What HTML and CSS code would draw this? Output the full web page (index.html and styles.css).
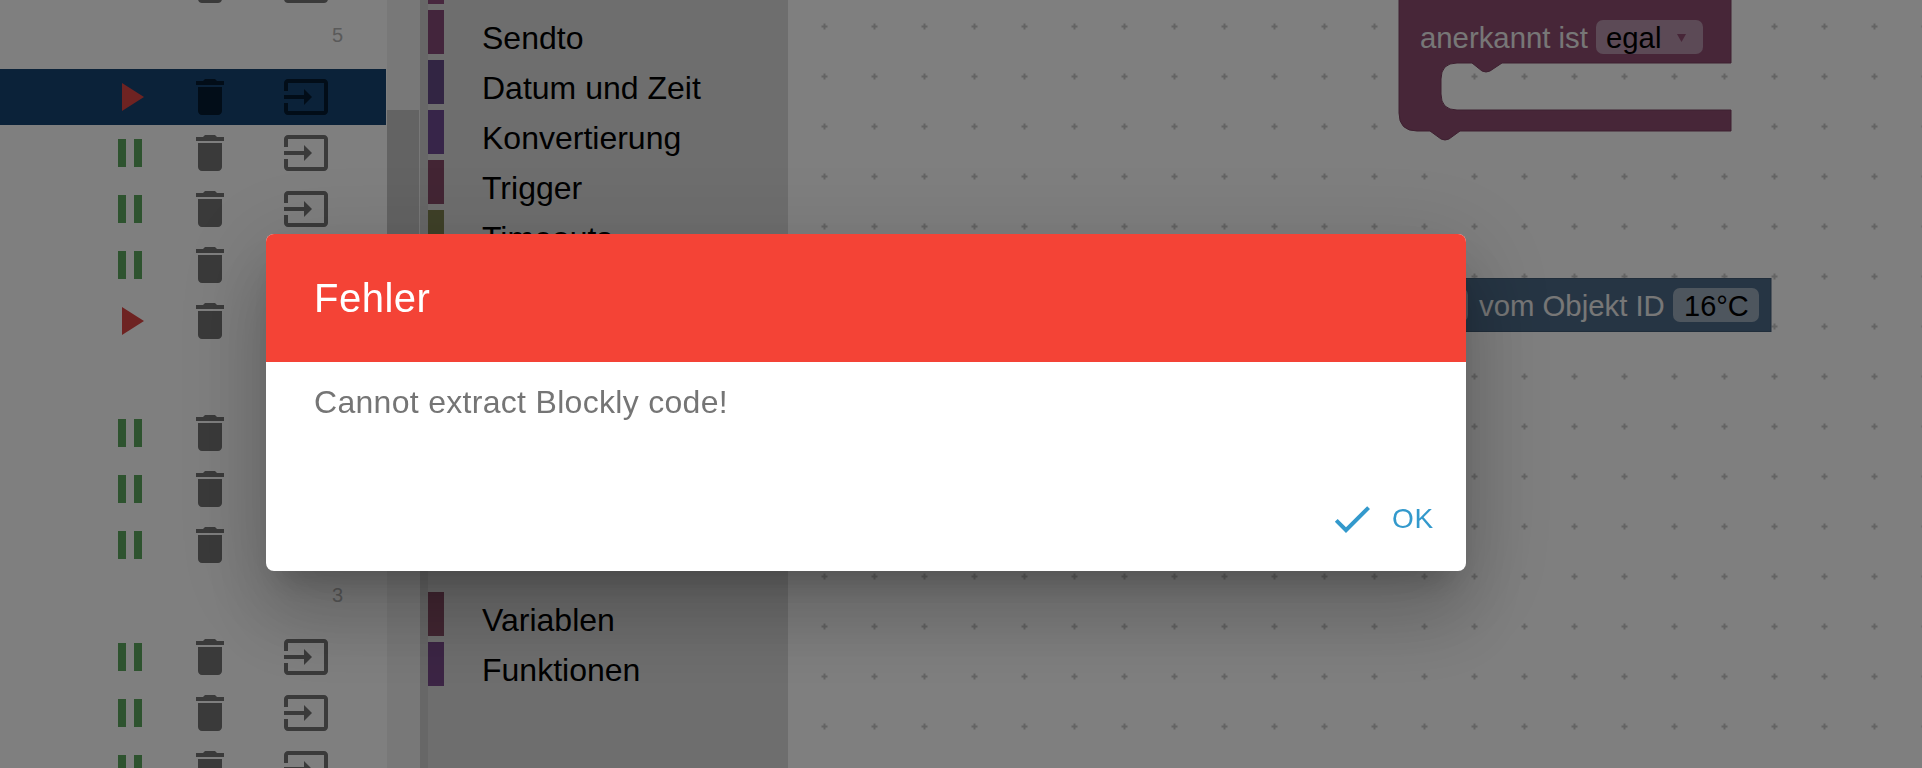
FILE: index.html
```html
<!DOCTYPE html>
<html lang="de">
<head>
<meta charset="utf-8">
<title>Skripte</title>
<link rel="stylesheet" href="styles.css">
</head>
<body>
<svg class="defs" width="0" height="0" aria-hidden="true">
  <symbol id="i-pause" viewBox="0 0 24 24"><path d="M6 19h4V5H6v14zm8-14v14h4V5h-4z"/></symbol>
  <symbol id="i-play" viewBox="0 0 24 24"><path d="M8 5v14l11-7z"/></symbol>
  <symbol id="i-delete" viewBox="0 0 24 24"><path d="M6 19c0 1.1.9 2 2 2h8c1.1 0 2-.9 2-2V7H6v12zM19 4h-3.5l-1-1h-5l-1 1H5v2h14V4z"/></symbol>
  <symbol id="i-input" viewBox="0 0 24 24"><path d="M21 3.01H3c-1.1 0-2 .9-2 2V9h2V4.99h18v14.03H3V15H1v4.01c0 1.1.9 1.98 2 1.98h18c1.1 0 2-.88 2-1.98v-14c0-1.11-.9-2-2-2zM11 16l4-4-4-4v3H1v2h10v3z"/></symbol>
  <symbol id="i-check" viewBox="0 0 24 24"><path d="M9 16.17L4.83 12l-1.42 1.41L9 19 21 7l-1.41-1.41z"/></symbol>
</svg>

<div class="app">
  <section class="scripts">
    <div class="row">
      <svg class="icon pause"><use href="#i-pause"/></svg>
      <svg class="icon action"><use href="#i-delete"/></svg>
      <svg class="icon action"><use href="#i-input"/></svg>
    </div>
    <div class="group">5</div>
    <div class="row selected">
      <svg class="icon play"><use href="#i-play"/></svg>
      <svg class="icon action"><use href="#i-delete"/></svg>
      <svg class="icon action"><use href="#i-input"/></svg>
    </div>
    <div class="row">
      <svg class="icon pause"><use href="#i-pause"/></svg>
      <svg class="icon action"><use href="#i-delete"/></svg>
      <svg class="icon action"><use href="#i-input"/></svg>
    </div>
    <div class="row">
      <svg class="icon pause"><use href="#i-pause"/></svg>
      <svg class="icon action"><use href="#i-delete"/></svg>
      <svg class="icon action"><use href="#i-input"/></svg>
    </div>
    <div class="row">
      <svg class="icon pause"><use href="#i-pause"/></svg>
      <svg class="icon action"><use href="#i-delete"/></svg>
      <svg class="icon action"><use href="#i-input"/></svg>
    </div>
    <div class="row">
      <svg class="icon play"><use href="#i-play"/></svg>
      <svg class="icon action"><use href="#i-delete"/></svg>
      <svg class="icon action"><use href="#i-input"/></svg>
    </div>
    <div class="group"></div>
    <div class="row">
      <svg class="icon pause"><use href="#i-pause"/></svg>
      <svg class="icon action"><use href="#i-delete"/></svg>
      <svg class="icon action"><use href="#i-input"/></svg>
    </div>
    <div class="row">
      <svg class="icon pause"><use href="#i-pause"/></svg>
      <svg class="icon action"><use href="#i-delete"/></svg>
      <svg class="icon action"><use href="#i-input"/></svg>
    </div>
    <div class="row">
      <svg class="icon pause"><use href="#i-pause"/></svg>
      <svg class="icon action"><use href="#i-delete"/></svg>
      <svg class="icon action"><use href="#i-input"/></svg>
    </div>
    <div class="group">3</div>
    <div class="row">
      <svg class="icon pause"><use href="#i-pause"/></svg>
      <svg class="icon action"><use href="#i-delete"/></svg>
      <svg class="icon action"><use href="#i-input"/></svg>
    </div>
    <div class="row">
      <svg class="icon pause"><use href="#i-pause"/></svg>
      <svg class="icon action"><use href="#i-delete"/></svg>
      <svg class="icon action"><use href="#i-input"/></svg>
    </div>
    <div class="row">
      <svg class="icon pause"><use href="#i-pause"/></svg>
      <svg class="icon action"><use href="#i-delete"/></svg>
      <svg class="icon action"><use href="#i-input"/></svg>
    </div>
  </section>

  <div class="scrollbar"><div class="thumb"></div></div>
  <div class="splitter"></div>

  <nav class="toolbox">
    <div class="cat c-system"></div>
    <div class="cat c-sendto">Sendto</div>
    <div class="cat c-date">Datum und Zeit</div>
    <div class="cat c-convert">Konvertierung</div>
    <div class="cat c-trigger">Trigger</div>
    <div class="cat c-timeouts">Timeouts</div>
    <div class="cat c-vars far">Variablen</div>
    <div class="cat c-funcs">Funktionen</div>
  </nav>

  <svg class="workspace" viewBox="788 0 1134 768" preserveAspectRatio="xMinYMin slice">
    <defs>
      <pattern id="grid" x="774.5" y="26.5" width="50" height="50" patternUnits="userSpaceOnUse">
        <path class="grid-mark" d="M0 -3V3M-3 0H3M50 -3V3M47 0H53M0 47V53M-3 50H3M50 47V53M47 50H53"/>
      </pattern>
    </defs>
    <rect class="grid-fill" x="788" y="0" width="1134" height="768"/>
    <path class="block-purple" d="M1399 -10H1731V63H1502L1490 71Q1486 73 1482 71L1472 63H1457Q1441 63 1441 79V94Q1441 110 1457 110H1731V131H1460L1449 139Q1445 141 1441 139L1430 131H1417Q1399 131 1399 113Z"/>
    <text class="block-label" x="1420" y="48">anerkannt ist</text>
    <rect class="field-purple" x="1596" y="20" width="107" height="34" rx="7"/>
    <text class="field-text" x="1606" y="48">egal</text>
    <path class="field-arrow" d="M1677 34H1686L1681.5 42Z"/>
    <rect class="block-blue" x="1440" y="278.5" width="331" height="53"/>
    <rect class="field-blue" x="1440" y="288" width="28" height="34" rx="7"/>
    <text class="block-label" x="1479" y="316">vom Objekt ID</text>
    <rect class="field-blue" x="1673" y="288" width="86" height="34" rx="7"/>
    <text class="field-text narrow" x="1684" y="316">16°C</text>
  </svg>
</div>

<div class="backdrop"></div>

<div class="dialog" role="dialog">
  <h2 class="dialog-title">Fehler</h2>
  <p class="dialog-text">Cannot extract Blockly code!</p>
  <div class="dialog-actions">
    <button class="ok-button" type="button"><svg class="ok-icon"><use href="#i-check"/></svg>OK</button>
  </div>
</div>
</body>
</html>
```

FILE: styles.css
```css
* { box-sizing: border-box; }

html, body {
  margin: 0;
  height: 768px;
  overflow: hidden;
  background: #fff;
  font-family: "Liberation Sans", Arial, sans-serif;
}

.defs { position: absolute; }

.app {
  display: flex;
  height: 768px;
  overflow: hidden;
}

/* script list */
.scripts {
  flex: 0 0 387px;
  padding-right: 1px;
  margin-top: -43px;
  height: 900px;
}

.row {
  display: grid;
  grid-template-columns: 80px 80px 112px;
  padding-left: 90px;
  height: 56px;
  align-items: center;
  justify-items: center;
}

.icon { width: 48px; height: 48px; display: block; }
.pause { fill: #5ca65e; }
.play { fill: #dc4644; }
.action { fill: #747474; }

.selected { background: #164472; }
.selected .action { fill: #041a30; }

.group {
  height: 56px;
  padding: 0 43px 12px 0;
  display: flex;
  align-items: center;
  justify-content: flex-end;
  font-size: 20px;
  color: #b4b4b4;
}

/* scrollbar and splitter */
.scrollbar {
  flex: 0 0 33px;
  background: #f1f1f1;
  padding-top: 110px;
}

.thumb {
  width: 32px;
  height: 430px;
  background: #c6c6c6;
}

.splitter { flex: 0 0 8px; background: #cecece; }

/* blockly toolbox */
.toolbox {
  flex: 0 0 360px;
  background: #ddd;
  height: 768px;
  overflow: hidden;
}

.cat {
  height: 44px;
  margin-bottom: 6px;
  border-left: 16px solid;
  padding: 3px 0 0 38px;
  font-size: 32px;
  line-height: 50px;
  color: #000;
  white-space: nowrap;
}

.c-system { margin-top: -40px; border-color: #8e4f7c; }
.c-sendto { border-color: #864a78; }
.c-date { border-color: #644a86; }
.c-convert { border-color: #6f4a92; }
.c-trigger { border-color: #864a68; }
.c-timeouts { border-color: #7e8250; }
.c-vars { border-color: #844c64; }
.c-funcs { border-color: #784a8a; }
.far { margin-top: 338px; }

/* workspace */
.workspace { flex: 1 1 0; height: 768px; display: block; background: #fff; }
.grid-fill { fill: url(#grid); }
.grid-mark { stroke: #c8c8c8; stroke-width: 2; fill: none; }
.block-purple { fill: #8e4c70; stroke: #7a4060; stroke-width: 1; }
.block-blue { fill: #4c6a88; stroke: #425c76; stroke-width: 1; }
.field-purple { fill: #b894ac; }
.field-blue { fill: #9cacbc; }
.block-label { fill: #eee; font-size: 29.33px; }
.field-text { fill: #000; font-size: 29.33px; }
.narrow { font-size: 29px; }
.field-arrow { fill: #8e4c70; }

/* modal */
.backdrop {
  position: fixed;
  inset: 0;
  background: rgba(0, 0, 0, .5);
}

.dialog {
  position: fixed;
  left: 266px;
  top: 234px;
  width: 1200px;
  height: 337px;
  display: flex;
  flex-direction: column;
  background: #fff;
  border-radius: 8px;
  overflow: hidden;
  box-shadow:
    0 22px 30px -14px rgba(0, 0, 0, .2),
    0 48px 76px 6px rgba(0, 0, 0, .14),
    0 18px 92px 16px rgba(0, 0, 0, .12);
}

.dialog-title {
  margin: 0;
  height: 128px;
  padding: 32px 48px;
  background: #f44336;
  color: #fff;
  font-size: 40px;
  font-weight: 400;
  line-height: 64px;
  letter-spacing: .5px;
}

.dialog-text {
  margin: 0;
  flex: 1 1 auto;
  padding: 16px 48px 0;
  font-size: 32px;
  line-height: 48px;
  letter-spacing: .3px;
  color: #757575;
}

.dialog-actions {
  display: flex;
  justify-content: flex-end;
  padding: 0 16px 16px;
}

.ok-button {
  display: flex;
  align-items: center;
  gap: 16px;
  height: 72px;
  padding: 0 16px;
  border: 0;
  background: none;
  color: #3399cc;
  font: 400 28px "Liberation Sans", Arial, sans-serif;
  letter-spacing: .8px;
}

.ok-icon { width: 48px; height: 48px; fill: currentColor; }
```
